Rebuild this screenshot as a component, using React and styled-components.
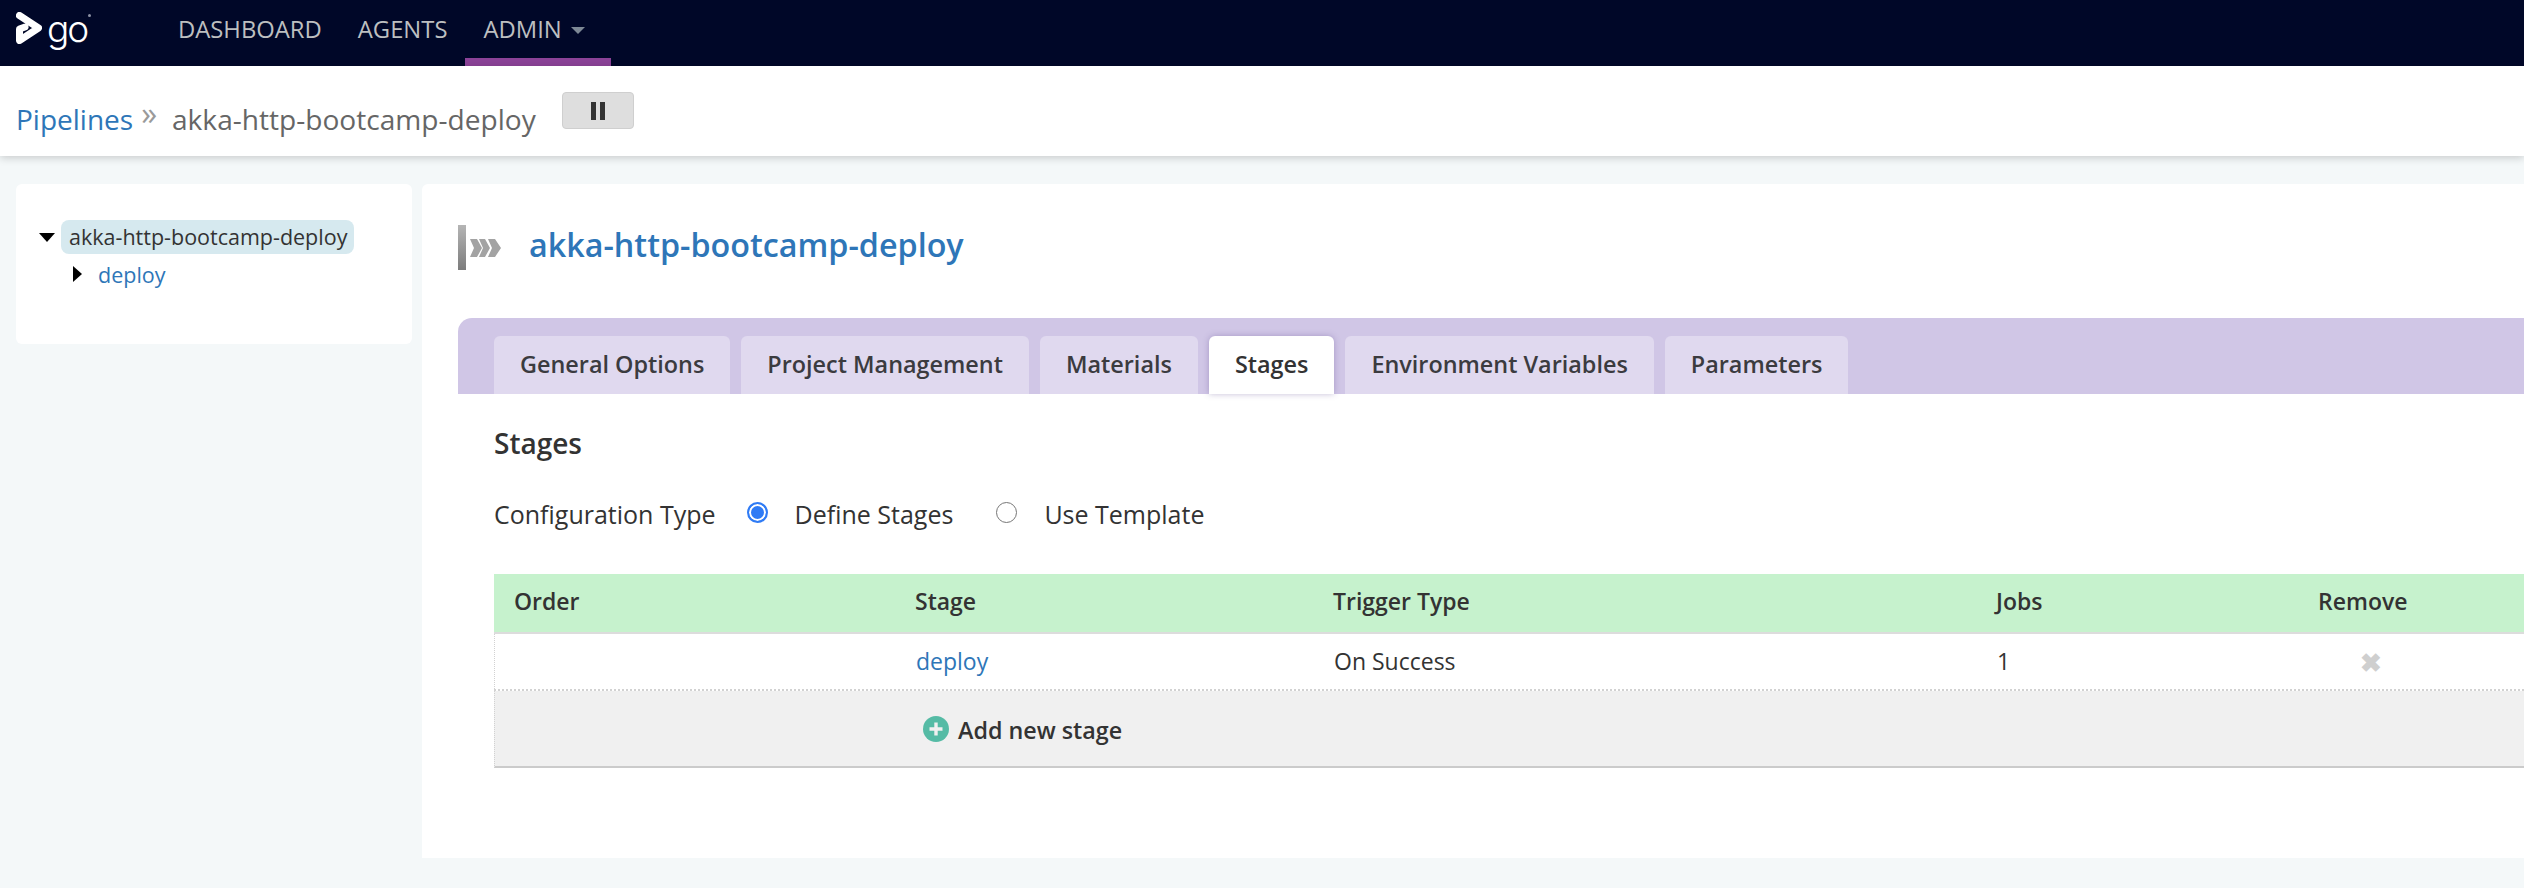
import React from "react";
import styled, { createGlobalStyle } from "styled-components";

const GlobalStyle = createGlobalStyle`
  html, body {
    margin: 0;
    padding: 0;
    overflow: hidden;
    background: #f4f8f9;
    font-family: "Open Sans", "Liberation Sans", sans-serif;
    color: #333;
  }
`;

const Page = styled.div`
  width: 2524px;
  height: 888px;
  overflow: hidden;
  background: #f4f8f9;
`;

const TopBar = styled.div`
  height: 66px;
  background: #000728;
  display: flex;
`;
const LogoBox = styled.div`
  width: 160px;
  padding: 12px 0 0 16px;
  box-sizing: border-box;
  display: flex;
  align-items: flex-start;
`;
const LogoText = styled.span`
  font-family: "Inter", sans-serif;
  font-weight: 300;
  font-size: 37px;
  line-height: 34px;
  color: #fff;
  margin-left: 5px;
  letter-spacing: -2px;
`;
const LogoMark = styled.i`
  width: 3px;
  height: 3px;
  border-radius: 50%;
  background: #8d93a5;
  margin-top: 2px;
  margin-left: 1px;
`;
const NavLink = styled.a`
  height: 66px;
  padding: 0 ${(p) => (p.$active ? "26px" : "18px")} 0 18px;
  box-sizing: border-box;
  display: flex;
  align-items: center;
  gap: 9px;
  font-size: 23.8px;
  color: #bdbfc0;
  border-bottom: 8px solid ${(p) => (p.$active ? "#8b4297" : "transparent")};
`;
const Caret = styled.i`
  display: block;
  margin-top: 3px;
  border-left: 7px solid transparent;
  border-right: 7px solid transparent;
  border-top: 7px solid #7d8895;
`;

const SubHeader = styled.div`
  height: 90px;
  background: #fff;
  box-shadow: 0 2px 8px rgba(0, 0, 0, 0.18);
  padding-left: 16px;
  display: flex;
  position: relative;
`;
const Crumb = styled.a`
  margin-top: 31px;
  font-size: 28px;
  line-height: 44px;
  color: #2e76b8;
`;
const CrumbSep = styled.span`
  margin: 27px 15px 0 8px;
  font-size: 32px;
  line-height: 40px;
  color: #9a9a9a;
`;
const CrumbCurrent = styled.span`
  margin-top: 31px;
  font-size: 28.1px;
  line-height: 44px;
  color: #666;
`;
const PauseButton = styled.button`
  width: 72px;
  height: 37px;
  margin: 26px 0 0 26px;
  padding: 0;
  background: #dedede;
  border: 1px solid #cfcfcf;
  border-radius: 4px;
  display: flex;
  align-items: center;
  justify-content: center;
  gap: 4px;
`;
const PauseBar = styled.i`
  width: 5px;
  height: 18px;
  background: #333;
`;

const Body = styled.div`
  display: flex;
  align-items: flex-start;
  padding: 28px 0 0 16px;
  gap: 10px;
`;
const Sidebar = styled.div`
  width: 396px;
  height: 160px;
  box-sizing: border-box;
  padding: 36px 0 0 23px;
  background: #fff;
  border-radius: 6px;
`;
const TreeRow = styled.div`
  display: flex;
  align-items: center;
  height: 34px;
  padding-left: ${(p) => p.$indent || 0}px;
  margin-bottom: ${(p) => p.$gap || 0}px;
`;
const CaretDown = styled.i`
  border-left: 8px solid transparent;
  border-right: 8px solid transparent;
  border-top: 9px solid #000;
  margin-right: 6px;
`;
const CaretRight = styled.i`
  border-top: 8px solid transparent;
  border-bottom: 8px solid transparent;
  border-left: 9px solid #000;
  margin-right: 16px;
`;
const TreeCurrent = styled.span`
  background: #d6e9ef;
  border-radius: 8px;
  padding: 0 7px 0 8px;
  font-size: 21.5px;
  line-height: 34px;
  color: #333;
`;
const TreeLink = styled.a`
  font-size: 21.5px;
  color: #2e76b8;
`;

const Main = styled.div`
  flex: 1;
  min-width: 0;
  height: 674px;
  background: #fff;
  border-radius: 6px 0 0 0;
  padding-left: 36px;
`;
const TitleRow = styled.div`
  height: 134px;
  display: flex;
  align-items: flex-start;
`;
const PipelineIcon = styled.svg`
  width: 48px;
  height: 46px;
  margin: 41px 23px 0 0;
`;
const Title = styled.h1`
  margin: 36px 0 0;
  font-size: 32.3px;
  line-height: 48px;
  font-weight: 600;
  color: #2e76b8;
`;

const TabBand = styled.div`
  height: 76px;
  box-sizing: border-box;
  padding: 18px 0 0 36px;
  background: #d0c6e6;
  border-radius: 14px 0 0 0;
  display: flex;
  align-items: flex-end;
  gap: 11px;
`;
const Tab = styled.div`
  height: 58px;
  box-sizing: border-box;
  padding: 0 26px 3px;
  display: flex;
  align-items: center;
  font-size: 23.4px;
  font-weight: 600;
  color: ${(p) => (p.$active ? "#333" : "#3b3b3f")};
  background: ${(p) => (p.$active ? "#fff" : "#e0d9ef")};
  border-radius: 6px 6px 0 0;
  box-shadow: ${(p) => (p.$active ? "0 0 6px rgba(90, 70, 140, 0.35)" : "none")};
`;

const Content = styled.div`
  padding: 0 0 0 36px;
`;
const SectionTitle = styled.h2`
  margin: 30px 0 0;
  font-size: 28px;
  line-height: 38px;
  font-weight: 600;
  color: #333;
`;
const ConfigRow = styled.div`
  display: flex;
  align-items: center;
  height: 40px;
  margin-top: 32px;
  font-size: 25px;
  color: #333;
`;
const Radio = styled.span`
  width: 21px;
  height: 21px;
  box-sizing: border-box;
  margin: -3px 0 0 ${(p) => (p.$left || 0)}px;
  border-radius: 50%;
  background: ${(p) => (p.$checked ? "#2f7bf5" : "#fff")};
  border: ${(p) => (p.$checked ? "2px solid #2f7bf5" : "1.5px solid #767676")};
  box-shadow: ${(p) => (p.$checked ? "inset 0 0 0 2px #fff" : "none")};
`;
const RadioLabel = styled.span`
  margin-left: 27px;
`;

const Table = styled.div`
  margin-top: 40px;
`;
const Row = styled.div`
  display: grid;
  grid-template-columns: 401px 418px 663px 325px 1fr;
  height: ${(p) => p.$height}px;
  box-sizing: border-box;
  background: ${(p) => p.$bg};
  border-bottom: ${(p) => p.$bottom};
  border-left: ${(p) => p.$left || "none"};
`;
const HeadCell = styled.div`
  padding-left: ${(p) => p.$pad || 20}px;
  font-size: 23px;
  font-weight: 600;
  line-height: 55px;
  color: #333;
`;
const Cell = styled.div`
  padding-left: 20px;
  font-size: 23px;
  line-height: 54px;
  color: ${(p) => p.$color || "#333"};
`;
const RemoveCell = styled.div`
  padding-left: 58px;
  font-size: 26px;
  line-height: 56px;
  font-weight: 700;
  color: #cfcfcf;
`;
const AddCell = styled.div`
  grid-column: 2 / 4;
  padding: 2px 0 0 27px;
  display: flex;
  align-items: center;
  gap: 9px;
  font-size: 23.3px;
  font-weight: 600;
  color: #333;
`;
const AddIcon = styled.svg`
  width: 26px;
  height: 26px;
  margin-top: -2px;
`;

const tabs = [
  "General Options",
  "Project Management",
  "Materials",
  "Stages",
  "Environment Variables",
  "Parameters",
];

export default function App() {
  return (
    <Page>
      <GlobalStyle />
      <TopBar>
        <LogoBox>
          <svg width="26" height="32" viewBox="0 0 26 32">
            <path
              d="M3.5 3.5 L22.5 16 L3.5 28.5 L3.5 17 L9 15"
              fill="none"
              stroke="#fff"
              strokeWidth="7"
              strokeLinejoin="round"
              strokeLinecap="round"
            />
          </svg>
          <LogoText>go</LogoText>
          <LogoMark />
        </LogoBox>
        <NavLink>DASHBOARD</NavLink>
        <NavLink>AGENTS</NavLink>
        <NavLink $active>
          ADMIN <Caret />
        </NavLink>
      </TopBar>

      <SubHeader>
        <Crumb>Pipelines</Crumb>
        <CrumbSep>»</CrumbSep>
        <CrumbCurrent>akka-http-bootcamp-deploy</CrumbCurrent>
        <PauseButton>
          <PauseBar />
          <PauseBar />
        </PauseButton>
      </SubHeader>

      <Body>
        <Sidebar>
          <TreeRow $gap={3}>
            <CaretDown />
            <TreeCurrent>akka-http-bootcamp-deploy</TreeCurrent>
          </TreeRow>
          <TreeRow $indent={34}>
            <CaretRight />
            <TreeLink>deploy</TreeLink>
          </TreeRow>
        </Sidebar>

        <Main>
          <TitleRow>
            <PipelineIcon viewBox="0 0 48 46">
              <defs>
                <linearGradient id="bar" x1="0" y1="0" x2="0" y2="1">
                  <stop offset="0" stopColor="#b5b5b5" />
                  <stop offset="1" stopColor="#7c7c7c" />
                </linearGradient>
              </defs>
              <rect x="0" y="0" width="8" height="45" fill="url(#bar)" />
              <path
                d="M12 14 H19 L24 23 L19 32 H12 L16 23 Z M21 14 H27 L32 23 L27 32 H21 L25 23 Z M30 14 H37 L43 23 L37 32 H30 L34 23 Z"
                fill="#a3a3a3"
              />
            </PipelineIcon>
            <Title>akka-http-bootcamp-deploy</Title>
          </TitleRow>

          <TabBand>
            {tabs.map((t) => (
              <Tab key={t} $active={t === "Stages"}>
                {t}
              </Tab>
            ))}
          </TabBand>

          <Content>
            <SectionTitle>Stages</SectionTitle>
            <ConfigRow>
              Configuration Type
              <Radio $checked $left={31} />
              <RadioLabel>Define Stages</RadioLabel>
              <Radio $left={43} />
              <RadioLabel>Use Template</RadioLabel>
            </ConfigRow>

            <Table>
              <Row $height={60} $bg="#c6f2cd" $bottom="2px solid #dcdcdc">
                <HeadCell>Order</HeadCell>
                <HeadCell>Stage</HeadCell>
                <HeadCell>Trigger Type</HeadCell>
                <HeadCell>Jobs</HeadCell>
                <HeadCell $pad={17}>Remove</HeadCell>
              </Row>
              <Row $height={57} $bg="#fff" $bottom="2px dotted #d2d2d2" $left="1px dotted #d2d2d2">
                <Cell />
                <Cell $color="#2e76b8">deploy</Cell>
                <Cell>On Success</Cell>
                <Cell>1</Cell>
                <RemoveCell>✖</RemoveCell>
              </Row>
              <Row $height={77} $bg="#f0f0f0" $bottom="2px solid #cbcbcb" $left="1px dotted #d2d2d2">
                <Cell />
                <AddCell>
                  <AddIcon viewBox="0 0 26 26">
                    <circle cx="13" cy="13" r="13" fill="#55bba5" />
                    <path d="M13 6.5 V19.5 M6.5 13 H19.5" stroke="#f0f0f0" strokeWidth="3.4" />
                  </AddIcon>
                  Add new stage
                </AddCell>
              </Row>
            </Table>
          </Content>
        </Main>
      </Body>
    </Page>
  );
}
